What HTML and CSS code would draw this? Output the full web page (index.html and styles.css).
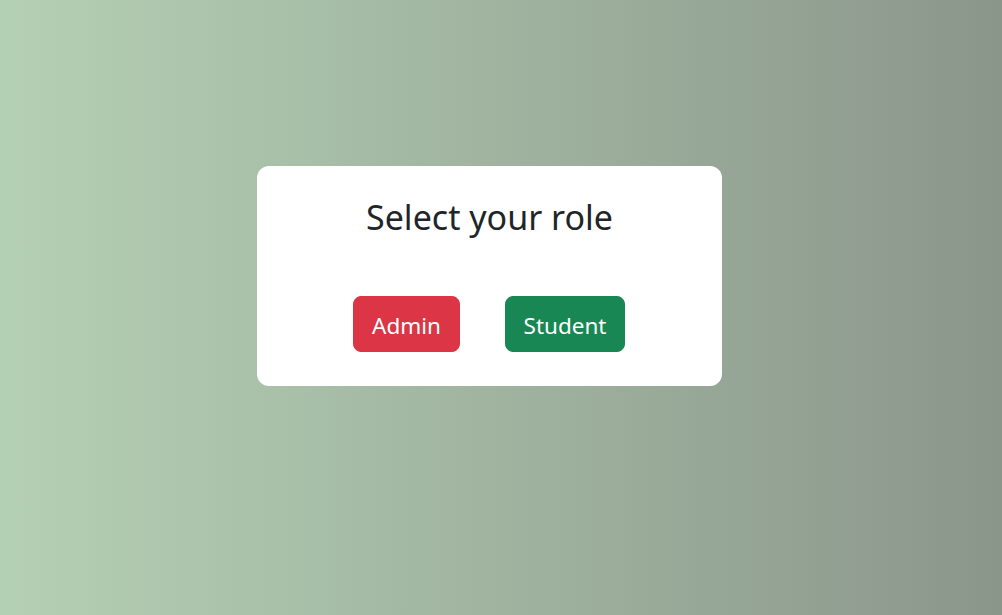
FILE: index.html
```html
<!DOCTYPE html>
<html lang="en">
<head>
<meta charset="utf-8">
<title>Select your role</title>
<link rel="stylesheet" href="styles.css">
</head>
<body>
  <main class="card">
    <h2 class="title">Select your role</h2>
    <div class="actions">
      <button class="btn btn-admin" type="button">Admin</button>
      <button class="btn btn-student" type="button">Student</button>
    </div>
  </main>
</body>
</html>
```
FILE: styles.css
```css
html, body {
  margin: 0;
  height: 100%;
}
body {
  background: linear-gradient(to right, #b4d0b4 0%, #8b968b 100%);
  font-family: "Noto Sans", "Open Sans", sans-serif;
  color: #212529;
  padding: 166px 0 0 257px;
  box-sizing: border-box;
}
.card {
  width: 465px;
  height: 220px;
  box-sizing: border-box;
  background: #fff;
  border-radius: 12px;
  padding-top: 31px;
  display: flex;
  flex-direction: column;
  align-items: center;
}
.title {
  margin: 0;
  font-size: 34px;
  font-weight: 400;
  line-height: 40px;
}
.actions {
  align-self: flex-start;
  margin: 59px 0 0 96px;
  display: flex;
  gap: 45px;
}
.btn {
  font-family: inherit;
  font-size: 22.5px;
  line-height: 30px;
  height: 56px;
  padding: 3px 0 0;
  border: 1px solid transparent;
  border-radius: 8px;
  color: #fff;
  cursor: pointer;
}
.btn-admin {
  background: #dc3545;
  border-color: #dc3545;
  width: 107px;
}
.btn-student {
  background: #198754;
  border-color: #198754;
  width: 120px;
}
```
